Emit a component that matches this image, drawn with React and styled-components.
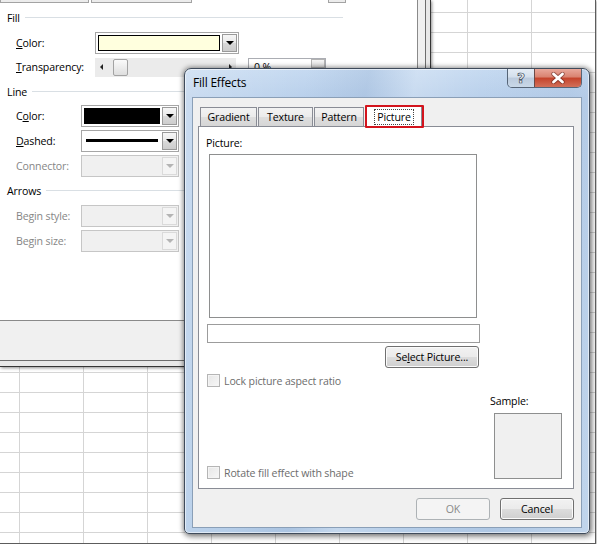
import React from "react";
import styled, { createGlobalStyle } from "styled-components";

const GlobalStyle = createGlobalStyle`
  html, body {
    margin: 0;
    padding: 0;
    background: #fff;
  }
  body {
    font-family: "Open Sans", "Noto Sans", sans-serif;
    font-size: 10.6px;
    letter-spacing: -0.15px;
    color: #000;
  }
  * {
    box-sizing: border-box;
  }
`;

/* ---------- page / sheet ---------- */

const Screen = styled.div`
  position: relative;
  width: 596px;
  height: 544px;
  overflow: hidden;
  border-right: 1px solid #5c5c5c;
  border-bottom: 1px solid #5c5c5c;
  box-shadow: 1px 1px 2px rgba(0, 0, 0, 0.3);
  background-color: #fff;
  background-image: linear-gradient(to right, #d5d5d5 1px, transparent 1px),
    linear-gradient(to bottom, #d5d5d5 1px, transparent 1px);
  background-size: 64px 20px;
  background-position: 19px 12px;
`;

/* ---------- Format Comment (behind) ---------- */

const BackWindow = styled.div`
  position: absolute;
  left: 0;
  top: 0;
  width: 431px;
  height: 367px;
  background: #e8e8e8;
  border-right: 1px solid #353535;
  border-bottom: 1px solid #353535;
  box-shadow: 1px 1px 3px rgba(0, 0, 0, 0.45);
`;

const BackClient = styled.div`
  width: 426px;
  height: 361px;
  background: #f0f0f0;
  border-right: 1px solid #6d6d6d;
  border-bottom: 1px solid #6d6d6d;
`;

const SheetPanel = styled.div`
  width: 418px;
  height: 321px;
  background: #fff;
  border-right: 1px solid #8a8a8a;
  border-bottom: 1px solid #8a8a8a;
`;

const TopStrip = styled.div`
  display: flex;
  height: 3px;
`;

const Stub = styled.div`
  width: ${(p) => p.$w}px;
  margin-left: ${(p) => p.$ml || 0}px;
  height: 3px;
  background: #ececec;
  border: 1px solid #a3a3a3;
  border-top: none;
`;

const Rows = styled.div`
  padding-top: 2px;
  display: flex;
  flex-direction: column;
`;

const Header = styled.div`
  display: flex;
  align-items: center;
  width: 343px;
  height: 25px;
  padding-left: 7px;
`;

const Rule = styled.div`
  flex: 1;
  height: 1px;
  margin-left: 5px;
  background: #d9dfe4;
`;

const Field = styled.div`
  display: flex;
  align-items: center;
  height: ${(p) => p.$h || 25}px;
  padding-left: 16px;
`;

const FieldLabel = styled.div`
  width: ${(p) => p.$w}px;
  color: ${(p) => (p.$disabled ? "#868686" : "#000")};
`;

const Combo = styled.div`
  width: ${(p) => p.$w}px;
  height: 22px;
  display: flex;
  gap: 1px;
  padding: 1px;
  border: 1px solid ${(p) => (p.$disabled ? "#c6c6c6" : "#a6a6a6")};
  background: ${(p) => (p.$disabled ? "#f0f0f0" : "#fff")};
`;

const Swatch = styled.div`
  flex: 1;
  margin: 1px;
  display: flex;
  align-items: center;
  padding: 0 1px;
  border: 1px solid ${(p) => p.$border || "transparent"};
  background: ${(p) => p.$fill || "transparent"};
`;

const DashLine = styled.div`
  width: 100%;
  height: 3px;
  background: #000;
`;

const DropBtn = styled.div`
  width: 15px;
  display: flex;
  align-items: center;
  justify-content: center;
  border: 1px solid ${(p) => (p.$disabled ? "#dadada" : "#9a9a9a")};
  background: ${(p) =>
    p.$disabled
      ? "#f4f4f4"
      : "linear-gradient(#f6f6f6 0%, #e9e9e9 50%, #d9d9d9 51%, #cdcdcd 100%)"};
`;

const Caret = styled.span`
  width: 0;
  height: 0;
  border-left: 4px solid transparent;
  border-right: 4px solid transparent;
  border-top: 4px solid ${(p) => (p.$disabled ? "#b4b4b4" : "#000")};
`;

const SliderTrack = styled.div`
  width: 141px;
  height: 19px;
  display: flex;
  align-items: center;
  background: #ebebeb;
`;

const SideArrow = styled.span`
  width: 0;
  height: 0;
  margin-left: ${(p) => (p.$right ? "auto" : "5px")};
  margin-right: ${(p) => (p.$right ? "4px" : "0")};
  border-top: 3px solid transparent;
  border-bottom: 3px solid transparent;
  ${(p) => (p.$right ? "border-left: 3px solid #222;" : "border-right: 3px solid #222;")}
`;

const Thumb = styled.div`
  width: 15px;
  height: 17px;
  margin-left: 10px;
  border: 1px solid #a3a3a3;
  border-radius: 2px;
  background: linear-gradient(#fafafa, #dedede);
`;

const SpinBox = styled.div`
  width: 78px;
  height: 19px;
  margin-left: 12px;
  display: flex;
  border: 1px solid #abadb3;
  background: #fff;
`;

const SpinText = styled.div`
  flex: 1;
  padding-left: 5px;
  line-height: 16px;
`;

const SpinBtn = styled.div`
  width: 14px;
  height: 9px;
  border: 1px solid #b3b3b3;
  background: linear-gradient(#f5f5f5, #dcdcdc);
`;

/* ---------- Fill Effects window ---------- */

const Win = styled.div`
  position: absolute;
  left: 184px;
  top: 68px;
  width: 406px;
  height: 466px;
  display: flex;
  flex-direction: column;
  padding: 0 7px 5px 7px;
  border: 1px solid #3f4b5b;
  border-radius: 7px 7px 5px 5px;
  background: linear-gradient(
      100deg,
      rgba(255, 255, 255, 0.25) 0%,
      rgba(255, 255, 255, 0) 25%,
      rgba(120, 150, 190, 0.18) 38%,
      rgba(255, 255, 255, 0.2) 48%,
      rgba(255, 255, 255, 0) 62%,
      rgba(120, 150, 190, 0.12) 80%,
      rgba(255, 255, 255, 0.15) 100%
    ),
    linear-gradient(#c6daf1, #b9d0eb 30px, #b6cee9);
  box-shadow: inset 0 0 0 1px rgba(255, 255, 255, 0.55),
    0 0 5px 1px rgba(0, 0, 0, 0.4), 2px 3px 6px rgba(0, 0, 0, 0.3);
`;

const TitleBar = styled.div`
  height: 28px;
  display: flex;
  align-items: flex-start;
`;

const Title = styled.div`
  margin-left: 1px;
  line-height: 28px;
  font-size: 12px;
  letter-spacing: -0.2px;
  color: #000;
`;

const Caption = styled.div`
  margin-left: auto;
  display: flex;
  height: 19px;
  border: 1px solid #566577;
  border-top: none;
  border-radius: 0 0 5px 5px;
  overflow: hidden;
`;

const HelpBtn = styled.div`
  width: 26px;
  display: flex;
  align-items: center;
  justify-content: center;
  background: linear-gradient(#e4ecf5 0%, #d3dfec 45%, #bccbdd 50%, #c9d8e8 100%);
  color: #eef2f6;
  font-family: "DejaVu Sans", sans-serif;
  font-size: 14px;
  font-weight: bold;
  line-height: 1;
  letter-spacing: 0;
  -webkit-text-stroke: 0.7px #3a4858;
`;

const CloseBtn = styled.div`
  width: 47px;
  display: flex;
  align-items: center;
  justify-content: center;
  border-left: 1px solid #6b4a48;
  background: linear-gradient(#e9a89b 0%, #d9826f 45%, #c5432b 50%, #d2705a 100%);
`;

const Client = styled.div`
  flex: 1;
  display: flex;
  flex-direction: column;
  padding: 7px 0 0 5px;
  border: 1px solid #8a9fb7;
  background: #f0f0f0;
`;

const TabRow = styled.div`
  position: relative;
  z-index: 1;
  display: flex;
  align-items: flex-start;
  height: 22px;
  margin-bottom: -1px;
  padding-left: 2px;
`;

const Tab = styled.div`
  position: relative;
  width: ${(p) => p.$w}px;
  margin-left: ${(p) => p.$ml || 0}px;
  margin-top: ${(p) => (p.$active ? 0 : 2)}px;
  height: ${(p) => (p.$active ? 22 : 19)}px;
  display: flex;
  align-items: center;
  justify-content: center;
  border: 1px solid #898c95;
  border-bottom: none;
  background: ${(p) =>
    p.$active ? "#fff" : "linear-gradient(#f3f3f3 0%, #ebebeb 50%, #dedede 51%, #d6d6d6 100%)"};
`;

const FocusText = styled.span`
  padding: 0 2px;
  line-height: 14px;
  border: 1px dotted #444;
`;

const Highlight = styled.div`
  position: absolute;
  left: -2px;
  right: -3px;
  top: -1px;
  bottom: -1px;
  border: 2px solid #d3141d;
  border-radius: 1px;
`;

const Panel = styled.div`
  width: 376px;
  height: 363px;
  display: flex;
  padding: 9px 0 9px 7px;
  border: 1px solid #898c95;
  background: #fff;
`;

const LeftCol = styled.div`
  width: 274px;
  display: flex;
  flex-direction: column;
`;

const RightCol = styled.div`
  margin-left: 10px;
  display: flex;
  flex-direction: column;
  justify-content: flex-end;
`;

const SmallCaption = styled.div`
  line-height: 14px;
  height: 14px;
`;

const Preview = styled.div`
  width: 268px;
  height: 164px;
  margin: 4px 0 0 3px;
  border: 1px solid #8e8f8f;
  background: #fff;
`;

const PathInput = styled.div`
  width: 273px;
  height: 19px;
  margin: 6px 0 0 1px;
  border: 1px solid #9c9c9c;
  background: #fff;
`;

const PushButton = styled.div`
  width: ${(p) => p.$w}px;
  height: 22px;
  display: flex;
  align-items: center;
  justify-content: center;
  border: 1px solid ${(p) => (p.$disabled ? "#adb2b5" : "#707070")};
  border-radius: 3px;
  color: ${(p) => (p.$disabled ? "#8a8a8a" : "#000")};
  background: ${(p) =>
    p.$disabled
      ? "#f4f4f4"
      : "linear-gradient(#f2f2f2 0%, #ebebeb 49%, #dddddd 50%, #cfcfcf 100%)"};
  box-shadow: inset 0 0 0 1px ${(p) => (p.$disabled ? "#f4f4f4" : "#fbfbfb")};
`;

const SelectBtn = styled(PushButton)`
  align-self: flex-end;
  margin: 3px 1px 0 0;
`;

const CheckRow = styled.div`
  display: flex;
  align-items: center;
  height: 13px;
  margin: ${(p) => (p.$top ? "6px 0 0 1px" : "auto 0 0 1px")};
  color: #6d6d6d;
`;

const CheckBox = styled.div`
  width: 13px;
  height: 13px;
  margin-right: 4px;
  border: 1px solid #b5b5b5;
  background: linear-gradient(135deg, #e6e6e6, #f7f7f7);
  box-shadow: inset 0 0 0 1px #f4f4f4;
`;

const SampleBox = styled.div`
  width: 68px;
  height: 66px;
  margin: 5px 0 0 4px;
  border: 1px solid #8e8f8f;
  background: #f0f0f0;
`;

const ButtonRow = styled.div`
  width: 376px;
  display: flex;
  justify-content: flex-end;
  gap: 10px;
  margin-top: 9px;
`;

const CloseGlyph = () => (
  <svg width="14" height="12" viewBox="0 0 14 12">
    <path
      d="M2.5 2 L11.5 10 M11.5 2 L2.5 10"
      stroke="#5a2019"
      strokeWidth="4.4"
      strokeLinecap="round"
      opacity="0.55"
    />
    <path
      d="M2.5 2 L11.5 10 M11.5 2 L2.5 10"
      stroke="#fff"
      strokeWidth="2.8"
      strokeLinecap="round"
    />
  </svg>
);

const App = () => {
  return (
    <>
      <GlobalStyle />
      <Screen>
        <BackWindow>
          <BackClient>
            <SheetPanel>
              <TopStrip>
                <Stub $w={89} />
                <Stub $w={101} $ml={2} />
                <Stub $w={18} $ml={136} />
              </TopStrip>
              <Rows>
                <Header>
                  <span>Fill</span>
                  <Rule />
                </Header>
                <Field $h={25}>
                  <FieldLabel $w={79}>
                    <u>C</u>olor:
                  </FieldLabel>
                  <Combo $w={144}>
                    <Swatch $fill="#ffffde" $border="#000" />
                    <DropBtn>
                      <Caret />
                    </DropBtn>
                  </Combo>
                </Field>
                <Field $h={24}>
                  <FieldLabel $w={79}>
                    <u>T</u>ransparency:
                  </FieldLabel>
                  <SliderTrack>
                    <SideArrow />
                    <Thumb />
                    <SideArrow $right />
                  </SliderTrack>
                  <SpinBox>
                    <SpinText>0 %</SpinText>
                    <SpinBtn />
                  </SpinBox>
                </Field>
                <Header>
                  <span>Line</span>
                  <Rule />
                </Header>
                <Field $h={24}>
                  <FieldLabel $w={65}>
                    C<u>o</u>lor:
                  </FieldLabel>
                  <Combo $w={98}>
                    <Swatch $fill="#000" $border="#000" />
                    <DropBtn>
                      <Caret />
                    </DropBtn>
                  </Combo>
                </Field>
                <Field>
                  <FieldLabel $w={65}>
                    <u>D</u>ashed:
                  </FieldLabel>
                  <Combo $w={98}>
                    <Swatch>
                      <DashLine />
                    </Swatch>
                    <DropBtn>
                      <Caret />
                    </DropBtn>
                  </Combo>
                </Field>
                <Field>
                  <FieldLabel $w={65} $disabled>
                    Connector:
                  </FieldLabel>
                  <Combo $w={98} $disabled>
                    <Swatch />
                    <DropBtn $disabled>
                      <Caret $disabled />
                    </DropBtn>
                  </Combo>
                </Field>
                <Header>
                  <span>Arrows</span>
                  <Rule />
                </Header>
                <Field>
                  <FieldLabel $w={65} $disabled>
                    Begin style:
                  </FieldLabel>
                  <Combo $w={98} $disabled>
                    <Swatch />
                    <DropBtn $disabled>
                      <Caret $disabled />
                    </DropBtn>
                  </Combo>
                </Field>
                <Field>
                  <FieldLabel $w={65} $disabled>
                    Begin size:
                  </FieldLabel>
                  <Combo $w={98} $disabled>
                    <Swatch />
                    <DropBtn $disabled>
                      <Caret $disabled />
                    </DropBtn>
                  </Combo>
                </Field>
              </Rows>
            </SheetPanel>
          </BackClient>
        </BackWindow>

        <Win>
          <TitleBar>
            <Title>Fill Effects</Title>
            <Caption>
              <HelpBtn>?</HelpBtn>
              <CloseBtn>
                <CloseGlyph />
              </CloseBtn>
            </Caption>
          </TitleBar>
          <Client>
            <TabRow>
              <Tab $w={57}>Gradient</Tab>
              <Tab $w={55} $ml={1}>
                Texture
              </Tab>
              <Tab $w={50} $ml={1}>
                Pattern
              </Tab>
              <Tab $w={56} $ml={2} $active>
                <FocusText>Picture</FocusText>
                <Highlight />
              </Tab>
            </TabRow>
            <Panel>
              <LeftCol>
                <SmallCaption>Picture:</SmallCaption>
                <Preview />
                <PathInput />
                <SelectBtn $w={94}>
                  <span>
                    Se<u>l</u>ect Picture...
                  </span>
                </SelectBtn>
                <CheckRow $top>
                  <CheckBox />
                  Lock picture aspect ratio
                </CheckRow>
                <CheckRow>
                  <CheckBox />
                  Rotate fill effect with shape
                </CheckRow>
              </LeftCol>
              <RightCol>
                <SmallCaption>Sample:</SmallCaption>
                <SampleBox />
              </RightCol>
            </Panel>
            <ButtonRow>
              <PushButton $w={74} $disabled>
                OK
              </PushButton>
              <PushButton $w={74}>Cancel</PushButton>
            </ButtonRow>
          </Client>
        </Win>
      </Screen>
    </>
  );
};

export default App;
